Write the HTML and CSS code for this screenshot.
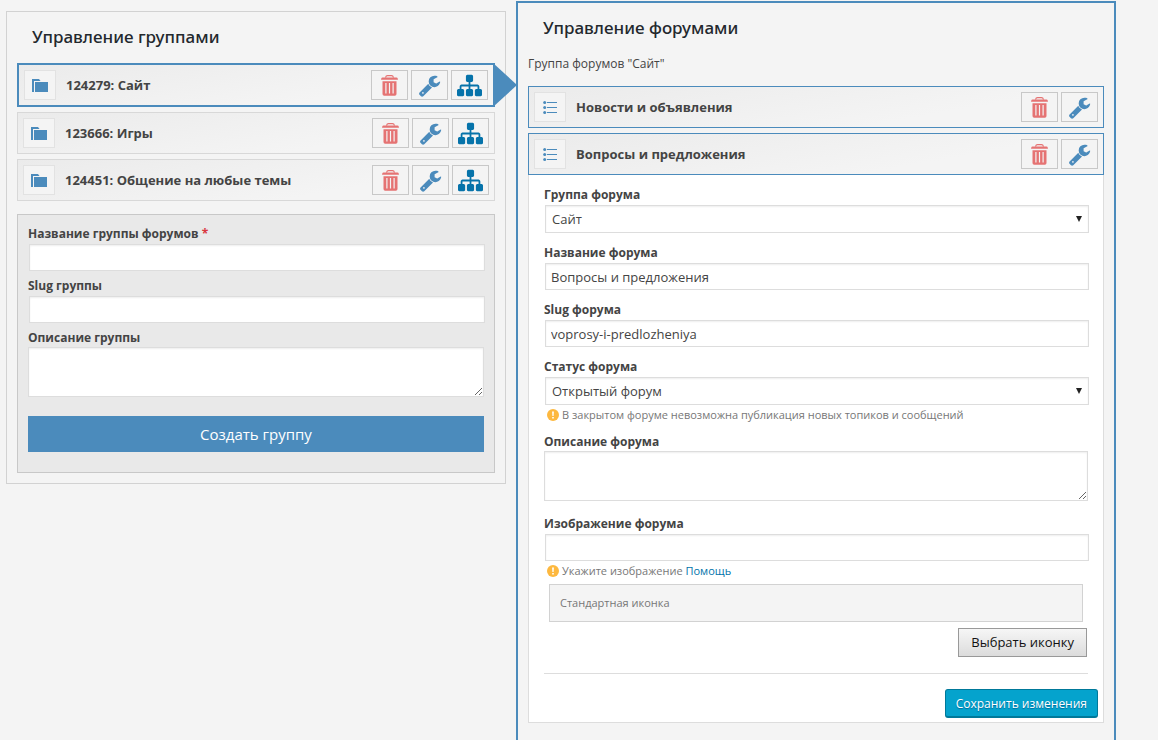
FILE: index.html
```html
<!DOCTYPE html>
<html lang="ru">
<head>
<meta charset="utf-8">
<title>Управление форумами</title>
<link rel="stylesheet" href="styles.css">
</head>
<body>
<svg class="sprite" aria-hidden="true">
  <symbol id="trash" viewBox="0 0 17 21"><path d="M4.500 2.600Q5 .7 6.500.7h4q1.500 0 2 1.900" fill="none" stroke="currentColor" stroke-width="1.200"/><path d="M1.500 2.600h14q1 0 1.200 1l.3 1.200H0l.3-1.200q.2-1 1.200-1z" fill="currentColor"/><path fill-rule="evenodd" d="M1.500 6.200h14v12.800q0 1.700-1.700 1.700H3.200q-1.700 0-1.700-1.700zM4.300 8v10.500h1.200V8zM7.900 8v10.500h1.200V8zM11.500 8v10.500h1.200V8z" fill="currentColor"/></symbol>
  <symbol id="wrench" viewBox="0 0 1792 1792"><path fill="currentColor" d="M448 1472q0-26-19-45t-45-19-45 19-19 45 19 45 45 19 45-19 19-45zm644-420l-682 682q-37 37-90 37-52 0-91-37l-106-108q-38-36-38-90 0-53 38-91l681-681q39 98 114.500 173.500t173.500 114.500zm634-435q0 39-23 106-47 134-164.500 217.500t-258.500 83.500q-185 0-316.500-131.500t-131.500-316.500 131.500-316.500 316.500-131.500q58 0 121.500 16.500t107.500 46.500q16 11 16 28t-16 28l-293 169v224l193 107q5-3 79-48.500t135.500-81 70.500-35.500q15 0 23.500 10t8.500 25z"/></symbol>
  <symbol id="sitemap" viewBox="0 0 1792 1792"><path fill="currentColor" d="M1792 1248v320q0 40-28 68t-68 28h-320q-40 0-68-28t-28-68v-320q0-40 28-68t68-28h96v-192h-512v192h96q40 0 68 28t28 68v320q0 40-28 68t-68 28h-320q-40 0-68-28t-28-68v-320q0-40 28-68t68-28h96v-192h-512v192h96q40 0 68 28t28 68v320q0 40-28 68t-68 28h-320q-40 0-68-28t-28-68v-320q0-40 28-68t68-28h96v-192q0-52 38-90t90-38h512v-192h-96q-40 0-68-28t-28-68v-320q0-40 28-68t68-28h320q40 0 68 28t28 68v320q0 40-28 68t-68 28h-96v192h512q52 0 90 38t38 90v192h96q40 0 68 28t28 68z"/></symbol>
  <symbol id="folder" viewBox="0 0 16 13"><path fill="currentColor" d="M0 0h7l1.500 2H2v11H0z"/><path fill="currentColor" d="M3 3h13v10H3z"/></symbol>
  <symbol id="list" viewBox="0 0 14 14"><g fill="currentColor"><circle cx="1.700" cy="2.500" r="1.500"/><circle cx="1.700" cy="7.500" r="1.500"/><circle cx="1.700" cy="12.500" r="1.500"/><path d="M4 2h10v1H4zM4 7h10v1H4zM4 12h10v1H4z"/></g></symbol>
  <symbol id="down" viewBox="0 0 6 6"><path fill="#222" d="M0 0h6L3 6z"/></symbol>
  <symbol id="alert" viewBox="0 0 12 12"><circle cx="6" cy="6" r="6" fill="#fdb83f"/><path d="M5.100 2.500h1.800l-.3 4.500H5.400zM5.200 8h1.600v1.500H5.200z" fill="#fff"/></symbol>
</svg>
<div class="page">
  <section class="panel">
    <h2 class="panel-title">Управление группами</h2>
    <ul class="rows">
      <li class="row row-active">
        <span class="row-icon"><svg class="i-folder"><use href="#folder"/></svg></span>
        <span class="row-name">124279: Сайт</span>
        <button type="button" class="tool tool-delete" aria-label="Удалить"><svg class="i-trash"><use href="#trash"/></svg></button>
        <button type="button" class="tool" aria-label="Настроить"><svg class="i-wrench"><use href="#wrench"/></svg></button>
        <button type="button" class="tool tool-map" aria-label="Форумы"><svg class="i-map"><use href="#sitemap"/></svg></button>
        <span class="row-arrow"></span>
      </li>
      <li class="row">
        <span class="row-icon"><svg class="i-folder"><use href="#folder"/></svg></span>
        <span class="row-name">123666: Игры</span>
        <button type="button" class="tool tool-delete" aria-label="Удалить"><svg class="i-trash"><use href="#trash"/></svg></button>
        <button type="button" class="tool" aria-label="Настроить"><svg class="i-wrench"><use href="#wrench"/></svg></button>
        <button type="button" class="tool tool-map" aria-label="Форумы"><svg class="i-map"><use href="#sitemap"/></svg></button>
      </li>
      <li class="row">
        <span class="row-icon"><svg class="i-folder"><use href="#folder"/></svg></span>
        <span class="row-name">124451: Общение на любые темы</span>
        <button type="button" class="tool tool-delete" aria-label="Удалить"><svg class="i-trash"><use href="#trash"/></svg></button>
        <button type="button" class="tool" aria-label="Настроить"><svg class="i-wrench"><use href="#wrench"/></svg></button>
        <button type="button" class="tool tool-map" aria-label="Форумы"><svg class="i-map"><use href="#sitemap"/></svg></button>
      </li>
    </ul>
    <form class="group-form">
      <div class="field">
        <label class="label" for="g-name">Название группы форумов <span class="required">*</span></label>
        <input class="input" id="g-name" type="text">
      </div>
      <div class="field">
        <label class="label" for="g-slug">Slug группы</label>
        <input class="input" id="g-slug" type="text">
      </div>
      <div class="field">
        <label class="label" for="g-desc">Описание группы</label>
        <textarea class="textarea" id="g-desc"></textarea>
      </div>
      <button type="button" class="create">Создать группу</button>
    </form>
  </section>

  <section class="panel panel-forums">
    <h2 class="panel-title">Управление форумами</h2>
    <p class="group-caption">Группа форумов "Сайт"</p>
    <ul class="rows">
      <li class="row row-forum">
        <span class="row-icon"><svg class="i-list"><use href="#list"/></svg></span>
        <span class="row-name">Новости и объявления</span>
        <button type="button" class="tool tool-delete" aria-label="Удалить"><svg class="i-trash"><use href="#trash"/></svg></button>
        <button type="button" class="tool" aria-label="Настроить"><svg class="i-wrench"><use href="#wrench"/></svg></button>
      </li>
      <li class="row row-forum">
        <span class="row-icon"><svg class="i-list"><use href="#list"/></svg></span>
        <span class="row-name">Вопросы и предложения</span>
        <button type="button" class="tool tool-delete" aria-label="Удалить"><svg class="i-trash"><use href="#trash"/></svg></button>
        <button type="button" class="tool" aria-label="Настроить"><svg class="i-wrench"><use href="#wrench"/></svg></button>
      </li>
    </ul>
    <form class="forum-form">
      <div class="forum-fields">
        <div class="field">
          <label class="label" for="f-group">Группа форума</label>
          <div class="select-box">
            <select class="select" id="f-group"><option>Сайт</option><option>Игры</option></select>
            <svg class="select-arrow"><use href="#down"/></svg>
          </div>
        </div>
        <div class="field">
          <label class="label" for="f-name">Название форума</label>
          <input class="input" id="f-name" type="text" value="Вопросы и предложения">
        </div>
        <div class="field">
          <label class="label" for="f-slug">Slug форума</label>
          <input class="input" id="f-slug" type="text" value="voprosy-i-predlozheniya">
        </div>
        <div class="field">
          <label class="label" for="f-status">Статус форума</label>
          <div class="select-box">
            <select class="select" id="f-status"><option>Открытый форум</option><option>Закрытый форум</option></select>
            <svg class="select-arrow"><use href="#down"/></svg>
          </div>
          <p class="note"><svg class="i-alert"><use href="#alert"/></svg><span>В закрытом форуме невозможна публикация новых топиков и сообщений</span></p>
        </div>
        <div class="field field-text">
          <label class="label" for="f-desc">Описание форума</label>
          <textarea class="textarea" id="f-desc"></textarea>
        </div>
        <div class="field">
          <label class="label" for="f-image">Изображение форума</label>
          <input class="input" id="f-image" type="text">
          <p class="note"><svg class="i-alert"><use href="#alert"/></svg><span>Укажите изображение <a class="help" href="#">Помощь</a></span></p>
          <div class="icon-box">Стандартная иконка</div>
          <button type="button" class="pick">Выбрать иконку</button>
        </div>
      </div>
      <div class="actions"><button type="button" class="save">Сохранить изменения</button></div>
    </form>
  </section>
</div>
</body>
</html>
```
FILE: styles.css
```css
* { box-sizing: border-box; }

body {
  margin: 0;
  background: #f4f4f4;
  color: #444;
  font: 13px/19px "Open Sans", "Noto Sans", sans-serif;
}

button, input, select, textarea { font: inherit; color: inherit; }
h2, p, ul { margin: 0; padding: 0; }
.sprite { display: none; }

.page {
  display: grid;
  grid-template-columns: 5fr 6fr;
  gap: 10px;
  align-items: start;
  min-height: 100vh;
  padding: 0 42px 0 6px;
}

.panel {
  margin-top: 11px;
  padding: 10px;
  border: 1px solid #d2d2d2;
}
.panel-forums {
  align-self: stretch;
  margin-top: 1px;
  border: 2px solid #4b8bbc;
  border-bottom: 0;
}
.panel-title {
  padding: 0 15px;
  margin-bottom: 11px;
  color: #23282d;
  font-family: "Noto Sans", "Open Sans", sans-serif;
  font-size: 17px;
  font-weight: 500;
  line-height: 30px;
}
.group-caption {
  margin-bottom: 13px;
  font-size: 12px;
}

.rows { display: grid; gap: 5px; list-style: none; }
.row {
  position: relative;
  display: flex;
  align-items: center;
  gap: 3px;
  padding: 5px;
  border: 1px solid #d8d8d8;
  background: linear-gradient(170deg, #ebebeb, #f4f4f4 70%);
}
.row-active { border: 2px solid #4b8bbc; }
.row-forum { border-color: #4b8bbc; }
.row-icon {
  display: grid;
  place-items: center;
  width: 32px;
  height: 30px;
  border: 1px solid #e2e2e2;
  background: #f4f4f4;
  color: #4b8bbc;
}
.row-name { flex: 1; padding-left: 7px; font-weight: 700; }
.row-arrow {
  position: absolute;
  top: -2px;
  bottom: -2px;
  left: 100%;
  width: 24px;
  background: #4b8bbc;
  clip-path: polygon(0 0, 100% 50%, 0 100%);
}
.tool {
  display: grid;
  place-items: center;
  width: 37px;
  height: 30px;
  padding: 0;
  border: 1px solid #c8c8c8;
  background: #f4f4f4;
  color: #4b8bbc;
}
.tool-delete { color: #e57373; }
.tool-map { color: #0673aa; }

.i-trash { width: 17px; height: 21px; }
.i-wrench { width: 23px; height: 23px; }
.i-map { width: 25px; height: 25px; }
.i-folder { width: 16px; height: 13px; }
.i-list { width: 14px; height: 14px; }
.i-alert { width: 12px; height: 12px; }

.group-form {
  margin-top: 13px;
  padding: 9px 10px 20px;
  border: 1px solid #c8c8c8;
  background: #e9e9e9;
}
.field { display: flow-root; margin-bottom: 4px; }
.label { display: block; font-size: 12px; font-weight: 700; }
.required { color: #d9363e; }
.input, .select, .textarea {
  display: block;
  width: 100%;
  border: 1px solid #ddd;
  border-radius: 0;
  background: #fff;
  box-shadow: inset 0 1px 2px rgba(0, 0, 0, .07);
  outline: 0;
}
.input { height: 27px; margin: 1px; padding: 0 5px; }
.select { height: 28px; margin: 1px; padding: 0 6px; appearance: none; }
.textarea { height: 50px; padding: 2px 6px; resize: vertical; }
.select-box { position: relative; display: flow-root; }
.select-arrow {
  position: absolute;
  top: 12px;
  right: 6px;
  width: 6px;
  height: 6px;
  pointer-events: none;
}
.create {
  display: block;
  width: 100%;
  height: 36px;
  margin-top: 19px;
  border: 0;
  background: #4b8bbc;
  color: #fff;
  font-size: 15px;
}

.forum-form {
  padding: 10px 5px 4px;
  border: 1px solid #ddd;
  border-top: 0;
  background: #fff;
}
.forum-fields {
  margin: 0 10px 15px;
  padding-bottom: 7px;
  border-bottom: 1px solid #ddd;
}
.forum-fields .field { margin-bottom: 9px; }
.forum-fields .field-text { margin-bottom: 13px; }
.note {
  display: flex;
  align-items: center;
  gap: 3px;
  padding-left: 3px;
  color: #777;
  font-size: 11px;
  line-height: 17px;
}
.help { color: #0073aa; text-decoration: none; }
.icon-box {
  margin: 5px 5px 6px;
  padding: 0 10px;
  border: 1px solid #d2d2d2;
  background: #f4f4f4;
  color: #777;
  font-size: 11px;
  line-height: 36px;
}
.pick {
  display: block;
  height: 29px;
  margin: 0 1px 0 auto;
  padding: 0 12px;
  border: 1px solid #999;
  background: linear-gradient(#f6f6f6, #dcdcdc);
  color: #111;
  font-size: 13px;
}
.actions { display: flex; justify-content: flex-end; }
.save {
  height: 29px;
  padding: 0 10px;
  border: 1px solid #00799a;
  border-bottom-width: 2px;
  border-radius: 3px;
  background: #05a3cd;
  color: #fff;
  font-size: 12px;
  text-shadow: 0 1px 1px #006799;
}
```
